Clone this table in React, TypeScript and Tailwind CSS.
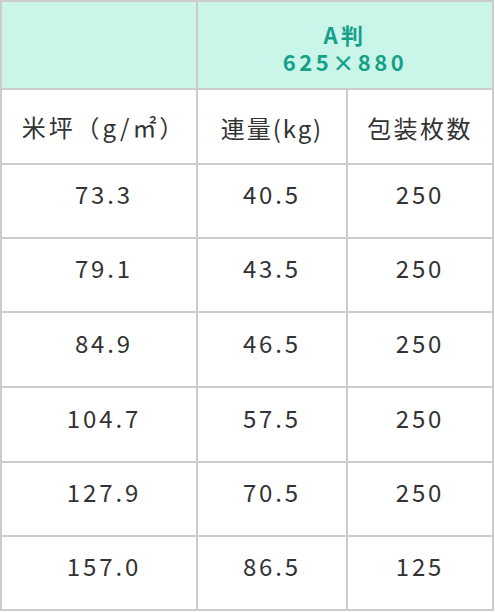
const rows = [
  { basis: "73.3", weight: "40.5", sheets: "250", h: "h-[74px]" },
  { basis: "79.1", weight: "43.5", sheets: "250", h: "h-[74px]" },
  { basis: "84.9", weight: "46.5", sheets: "250", h: "h-[75px]" },
  { basis: "104.7", weight: "57.5", sheets: "250", h: "h-[75px]" },
  { basis: "127.9", weight: "70.5", sheets: "250", h: "h-[74px]" },
  { basis: "157.0", weight: "86.5", sheets: "125", h: "h-[74px]" },
];

const cell =
  "flex items-center justify-center border-r-2 border-b-2 border-[#cccccc]";

export default function App() {
  return (
    <div
      className="w-[495px] bg-white text-[#333333]"
      style={{ fontFamily: '"Noto Sans CJK JP", "Noto Sans", sans-serif' }}
    >
      <div className="grid w-[494px] grid-cols-[196px_150px_146px] border-t-2 border-l-2 border-[#cccccc]">
        <div className={`${cell} h-[88px] bg-[#c9f6e9]`} />
        <div
          className={`${cell} col-span-2 h-[88px] flex-col pt-[5px] bg-[#c9f6e9] text-[22px] font-bold leading-[27px] tracking-[0.16em] text-[#17a088]`}
        >
          <span>A判</span>
          <span>625×880</span>
        </div>

        <div className={`${cell} h-[75px] pl-[10px] text-[24px] leading-none tracking-[0.12em]`}>
          米坪（g/㎡）
        </div>
        <div className={`${cell} h-[75px] pt-[2px] text-[24px] leading-none tracking-[0.08em]`}>
          連量(kg)
        </div>
        <div className={`${cell} h-[75px] pt-[2px] text-[24px] leading-none tracking-[0.1em]`}>
          包装枚数
        </div>

        {rows.map((r) => (
          <div key={r.basis} className="contents">
            <div className={`${cell} ${r.h} pb-[14px] pl-[10px] text-[24px] leading-none tracking-[0.12em]`}>
              {r.basis}
            </div>
            <div className={`${cell} ${r.h} pb-[14px] text-[24px] leading-none tracking-[0.12em]`}>
              {r.weight}
            </div>
            <div className={`${cell} ${r.h} pb-[14px] text-[24px] leading-none tracking-[0.12em]`}>
              {r.sheets}
            </div>
          </div>
        ))}
      </div>
    </div>
  );
}
